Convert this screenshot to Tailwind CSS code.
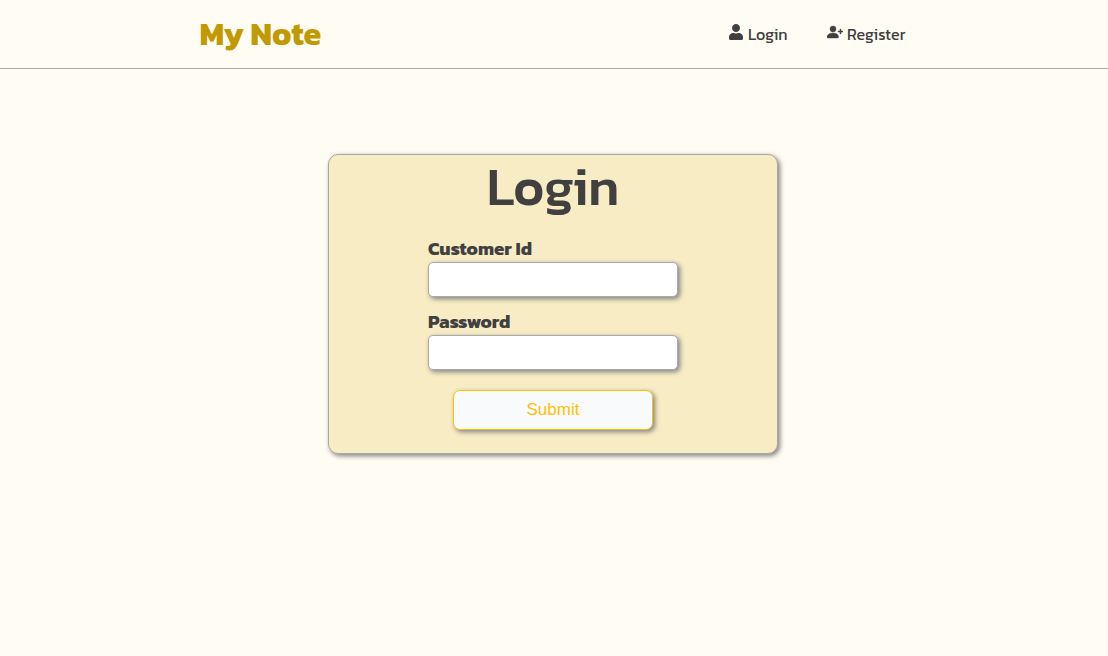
<!DOCTYPE html>
<html lang="en">
<head>
<meta charset="utf-8">
<title>My Note</title>
<script src="https://cdn.jsdelivr.net/npm/@tailwindcss/browser@4"></script>
</head>
<body class="min-h-screen overflow-hidden bg-[#fffcf4] font-['Kanit','Noto_Sans',sans-serif] text-[#404040]">
<header class="flex h-[69px] items-center justify-between border-b border-[#a9a9a9] pr-[202px] pl-[199.5px]">
  <a class="text-[32px] leading-[67px] font-bold whitespace-nowrap text-[#c09a00]">My Note</a>
  <nav class="flex items-center gap-[39px] text-base leading-6">
    <a class="flex w-[59px] items-center gap-[5px] whitespace-nowrap">
      <svg class="mb-1 h-4 w-3.5 shrink-0" viewBox="0 0 448 512" fill="currentColor"><path d="M224 256c70.700 0 128-57.300 128-128S294.700 0 224 0 96 57.300 96 128s57.300 128 128 128zm89.600 32h-16.700c-22.200 10.200-46.900 16-72.900 16s-50.600-5.800-72.900-16h-16.700C60.200 288 0 348.200 0 422.400V464c0 26.500 21.500 48 48 48h352c26.500 0 48-21.500 48-48v-41.600c0-74.200-60.200-134.400-134.400-134.400z"/></svg>
      <span>Login</span>
    </a>
    <a class="flex w-[79px] items-center gap-1 whitespace-nowrap">
      <svg class="mb-1 size-4 shrink-0" viewBox="0 0 16 16" fill="currentColor"><path stroke="currentColor" stroke-width=".4" d="M1 14s-1 0-1-1 1-4 6-4 5.500 3 5.500 4-1 1-1 1H1zm5-6a3 3 0 1 0 0-6 3 3 0 0 0 0 6z"/><path stroke="currentColor" stroke-width=".5" d="M13.500 5a.5.5 0 0 1 .5.5V7h1.500a.5.5 0 0 1 0 1H14v1.500a.5.5 0 0 1-1 0V8h-1.500a.5.5 0 0 1 0-1H13V5.500a.5.5 0 0 1 .5-.5z"/></svg>
      <span>Register</span>
    </a>
  </nav>
</header>
<main class="pt-[85px] pl-[328px]">
  <form class="flex h-[300px] w-[450px] flex-col items-center rounded-[10px] border border-[#a9a9a9] bg-[#f8ecc4] shadow-[2px_2px_5px_#808080]">
    <h1 class="h-[76px] text-[52.8px] leading-[64px] font-medium">Login</h1>
    <div class="w-[250px]">
      <label for="customer" class="block h-[31px] text-[18.72px] leading-[34px] font-bold whitespace-nowrap">Customer Id</label>
      <input id="customer" type="text" class="block h-[35px] w-[250px] rounded-[5px] border border-[#a9a9a9] bg-white px-2 shadow-[2px_2px_5px_#808080] outline-none">
      <label for="password" class="mt-[7px] block h-[31px] text-[18.72px] leading-[34px] font-bold whitespace-nowrap">Password</label>
      <input id="password" type="password" class="block h-[35px] w-[250px] rounded-[5px] border border-[#a9a9a9] bg-white px-2 shadow-[2px_2px_5px_#808080] outline-none">
    </div>
    <button type="button" class="mt-5 h-10 w-[200px] rounded-[7px] border border-[#ffc107] bg-[#f8fafc] font-['Liberation_Sans',Arial,sans-serif] text-[17px] leading-[38px] text-[#ffc107] shadow-[2px_2px_5px_#808080]">Submit</button>
  </form>
</main>
</body>
</html>
